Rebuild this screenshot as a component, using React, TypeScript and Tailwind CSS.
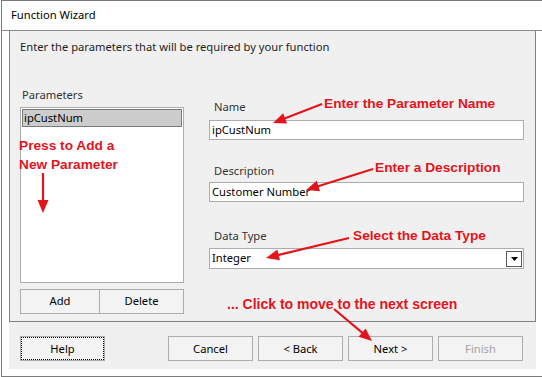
import React from "react";

const RED = "#e3141c";

function Arrow({ x1, y1, x2, y2 }: { x1: number; y1: number; x2: number; y2: number }) {
  const dx = x2 - x1;
  const dy = y2 - y1;
  const len = Math.sqrt(dx * dx + dy * dy);
  const ux = dx / len;
  const uy = dy / len;
  const hl = 13;
  const hw = 5.5;
  const bx = x2 - ux * hl;
  const by = y2 - uy * hl;
  const px = -uy * hw;
  const py = ux * hw;
  return (
    <g>
      <line x1={x1} y1={y1} x2={bx + ux * 2} y2={by + uy * 2} stroke={RED} strokeWidth={2.2} />
      <polygon points={`${x2},${y2} ${bx + px},${by + py} ${bx - px},${by - py}`} fill={RED} />
    </g>
  );
}

function Btn({ label, disabled, focus, className }: { label: string; disabled?: boolean; focus?: boolean; className?: string }) {
  return (
    <div className={`w-[85px] h-[25px] border border-[#adadad] bg-[#f3f3f3] flex items-center justify-center ${className ?? ""}`}>
      {focus ? (
        <div className="w-full h-full border border-dotted border-black flex items-center justify-center text-[11.2px] leading-none text-black">
          {label}
        </div>
      ) : (
        <span className={`text-[11.2px] leading-none ${disabled ? "text-[#a3a3a3]" : "text-black"}`}>{label}</span>
      )}
    </div>
  );
}

export default function App() {
  return (
    <div className="relative w-[542px] h-[377px] bg-white overflow-hidden font-['Noto_Sans',sans-serif]">
      <div className="ml-[1px] w-[541px] h-[377px] border-l border-t border-b border-[#7a7a7a] flex flex-col">
        {/* title bar */}
        <div className="h-[30px] border-b border-[#8a8a8a] flex items-center pl-[9px] text-[11.2px] text-black">
          Function Wizard
        </div>
        {/* body */}
        <div className="flex-1 pl-[7px]">
          <div className="w-[527px] h-[338px] bg-[#f0f0f0] flex flex-col">
            {/* top panel */}
            <div className="h-[291px] border-l border-r border-b border-[#828282] flex flex-col">
              <div className="pt-[8px] pl-[10px] h-[24px] text-[11.2px] leading-[16px] text-[#1e1e1e]">
                Enter the parameters that will be required by your function
              </div>
              <div className="mt-[32px] flex">
                {/* left column */}
                <div className="ml-[10px] w-[164px] flex flex-col">
                  <div className="h-[16px] leading-[16px] text-[11.2px] text-[#333] pl-[2px]">Parameters</div>
                  <div className="mt-[4px] h-[176px] border border-[#abadb3] bg-white p-[1px]">
                    <div className="h-[18px] bg-[#cccccc] border border-[#7a7a7a] flex items-center pl-[1px] text-[11.2px] text-black">
                      ipCustNum
                    </div>
                  </div>
                  <div className="mt-[6px] flex">
                    <div className="w-[80px] h-[25px] border border-[#adadad] bg-[#f3f3f3] flex items-center justify-center text-[11.2px] text-black">
                      Add
                    </div>
                    <div className="w-[84px] h-[25px] border border-l-0 border-[#adadad] bg-[#f3f3f3] flex items-center justify-center text-[11.2px] text-black">
                      Delete
                    </div>
                  </div>
                </div>
                {/* right column */}
                <div className="ml-[25px] w-[315px] flex flex-col">
                  <div className="mt-[12px] h-[16px] leading-[16px] text-[11.2px] text-[#333] pl-[5px]">Name</div>
                  <div className="mt-[5px] h-[20px] border border-[#abadb3] bg-white flex items-center pl-[2px] text-[11.2px] text-black">
                    ipCustNum
                  </div>
                  <div className="mt-[23px] h-[16px] leading-[16px] text-[11.2px] text-[#333] pl-[5px]">Description</div>
                  <div className="mt-[3px] h-[20px] border border-[#abadb3] bg-white flex items-center pl-[2px] text-[11.2px] text-black">
                    Customer Number
                  </div>
                  <div className="mt-[26px] h-[16px] leading-[16px] text-[11.2px] text-[#333] pl-[5px]">Data Type</div>
                  <div className="mt-[4px] h-[21px] border border-[#abadb3] bg-white flex items-center justify-between pl-[2px] pr-[1px] text-[11.2px] text-black">
                    <span>Integer</span>
                    <div className="w-[16px] h-[16px] border border-[#5a5a5a] bg-white flex items-center justify-center">
                      <svg width="7" height="4" viewBox="0 0 7 4">
                        <polygon points="0,0 7,0 3.5,4" fill="#000" />
                      </svg>
                    </div>
                  </div>
                </div>
              </div>
            </div>
            {/* bottom buttons */}
            <div className="h-[47px] pl-[11px] pt-[14px] flex">
              <Btn label="Help" focus />
              <div className="ml-[63px] flex gap-[5px]">
                <Btn label="Cancel" />
                <Btn label="< Back" />
                <Btn label="Next >" />
                <Btn label="Finish" disabled />
              </div>
            </div>
          </div>
        </div>
      </div>

      {/* annotations overlay */}
      <div className="absolute inset-0 pointer-events-none font-['Liberation_Sans',Arial,sans-serif] font-bold text-[13.7px] leading-[16px] text-[#e3141c]">
        <div className="absolute left-[324px] top-[96px]">Enter the Parameter Name</div>
        <div className="absolute left-[375px] top-[160px]">Enter a Description</div>
        <div className="absolute left-[353px] top-[228px]">Select the Data Type</div>
        <div className="absolute left-[19px] top-[138px]">Press to Add a</div>
        <div className="absolute left-[19px] top-[157px]">New Parameter</div>
        <div className="absolute left-[227px] top-[296px] text-[14px]">... Click to move to the next screen</div>
        <svg className="absolute inset-0" width="542" height="377" viewBox="0 0 542 377">
          <Arrow x1={322} y1={104} x2={273} y2={123} />
          <Arrow x1={373} y1={169} x2={306} y2={190} />
          <Arrow x1={349} y1={238} x2={266} y2={258} />
          <Arrow x1={43} y1={173} x2={43} y2={213} />
          <Arrow x1={334} y1={309} x2={372} y2={341} />
        </svg>
      </div>
    </div>
  );
}
